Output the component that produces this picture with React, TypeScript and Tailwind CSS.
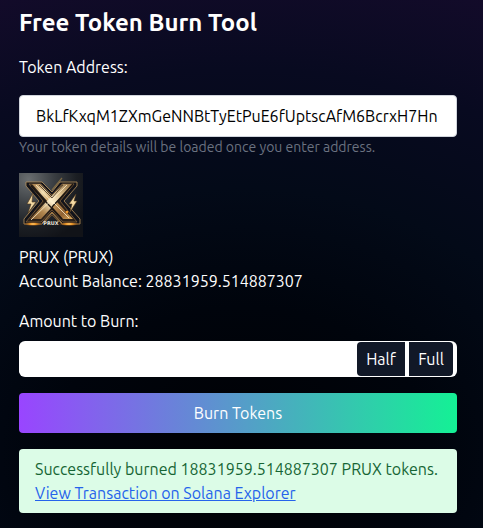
import { useState } from "react";

function TokenLogo() {
  return (
    <svg viewBox="0 0 64 64" className="mt-4 block size-16" role="img" aria-label="PRUX logo">
      <defs>
        <radialGradient id="plate" cx="0.15" cy="0.1" r="1">
          <stop offset="0" stopColor="#6a6e70" />
          <stop offset="0.4" stopColor="#3a3e42" />
          <stop offset="0.75" stopColor="#1b1e23" />
          <stop offset="1" stopColor="#111318" />
        </radialGradient>
        <linearGradient id="goldDown" x1="0" y1="0" x2="1" y2="1">
          <stop offset="0" stopColor="#a87d48" />
          <stop offset="0.25" stopColor="#eed6a8" />
          <stop offset="0.5" stopColor="#d0a364" />
          <stop offset="0.8" stopColor="#8f6234" />
          <stop offset="1" stopColor="#e0ac5c" />
        </linearGradient>
        <linearGradient id="goldUp" x1="1" y1="0" x2="0" y2="1">
          <stop offset="0" stopColor="#8a683c" />
          <stop offset="0.3" stopColor="#dcc08e" />
          <stop offset="0.5" stopColor="#fdf0cf" />
          <stop offset="0.75" stopColor="#b1874f" />
          <stop offset="1" stopColor="#7a532b" />
        </linearGradient>
        <radialGradient id="glow">
          <stop offset="0" stopColor="#fff3b8" />
          <stop offset="0.35" stopColor="#f09a2a" />
          <stop offset="1" stopColor="#8a4308" stopOpacity="0" />
        </radialGradient>
      </defs>
      <rect width="64" height="64" fill="url(#plate)" />
      <path d="M33 17L43 5" stroke="#7d6a45" strokeWidth="1.2" />
      <path d="M7 9H23L33 19L41 9H58V13L45 28L61 46V51H43L33 40L23 51H5V46L20 28L7 13Z" fill="#12131a" stroke="#b8925c" strokeWidth="0.8" />
      <path d="M10 11H22L33 22L43 11H55L41 28L58 49H44L33 37L22 49H7L24 28Z" fill="#2a2018" stroke="#80603a" strokeWidth="0.8" />
      <path d="M13 11H21L54 46H44Z" fill="url(#goldDown)" />
      <path d="M44 11H54L22 46H11Z" fill="url(#goldUp)" />
      <path d="M12 13L43 46M54 11L33 34" fill="none" stroke="#1c1510" strokeWidth="1.2" />
      <path d="M17 12L32 28M48 12L12 47M34 29L50 45" fill="none" stroke="#fff0cb" strokeWidth="0.8" />
      <path d="M20 12L33 25L44 12" fill="none" stroke="#40301f" strokeWidth="0.8" />
      <path d="M23 50L33 39L43 50" fill="none" stroke="#c98f45" strokeWidth="0.8" />
      <path d="M26 49L33 42L40 49" fill="none" stroke="#7d5528" strokeWidth="0.8" />
      <path d="M14 20L8 31H12L9 40L17 29H13Z" fill="#f3d9a3" stroke="#4f3519" strokeWidth="0.6" />
      <path d="M57 21L50 31H53L51 39L58 28H55Z" fill="#f3d9a3" stroke="#4f3519" strokeWidth="0.6" />
      <ellipse cx="14" cy="51" rx="10" ry="2" fill="url(#glow)" />
      <ellipse cx="50" cy="51" rx="11" ry="2" fill="url(#glow)" />
      <circle cx="48" cy="39" r="2" fill="url(#glow)" />
      <text x="32" y="52" textAnchor="middle" fontSize="5" fontWeight="700" fill="#e9e4da" fontFamily="DejaVu Sans, sans-serif">PRUX</text>
    </svg>
  );
}

export default function App() {
  const [address, setAddress] = useState("BkLfKxqM1ZXmGeNNBtTyEtPuE6fUptscAfM6BcrxH7Hn");
  const [amount, setAmount] = useState("");

  return (
    <main className="min-h-screen bg-[radial-gradient(130%_90%_at_50%_85%,#000104_0%,#00040c_30%,#030a18_55%,#080a20_80%,#140b2b_105%)] pt-[7px] pr-[26px] pb-4 pl-[19px] font-['Ubuntu','Noto_Sans',sans-serif] text-base text-white">
      <h1 className="mb-4 text-2xl font-bold">Free Token Burn Tool</h1>

      <label htmlFor="address" className="mb-4 block">Token Address:</label>
      <input
        id="address"
        type="text"
        value={address}
        onChange={(e) => setAddress(e.target.value)}
        className="block w-full rounded border border-gray-300 bg-white px-4 py-2 text-black"
      />
      <p className="text-sm text-[#6b7280]">Your token details will be loaded once you enter address.</p>

      <TokenLogo />
      <div className="mt-2 mb-4">
        <p>PRUX (PRUX)</p>
        <p>Account Balance: 28831959.514887307</p>
      </div>

      <label htmlFor="amount" className="mb-2 block">Amount to Burn:</label>
      <div className="flex rounded-md bg-white py-px pr-1">
        <input
          id="amount"
          type="text"
          value={amount}
          onChange={(e) => setAmount(e.target.value)}
          className="min-w-0 flex-1 rounded-l-md bg-white px-4 text-black outline-none"
        />
        <div className="flex gap-1">
          <button type="button" className="h-[34px] w-12 rounded-l bg-[#111827]">Half</button>
          <button type="button" className="h-[34px] w-11 rounded-r bg-[#111827]">Full</button>
        </div>
      </div>

      <button type="button" className="mt-4 block h-10 w-full rounded bg-[linear-gradient(to_right,#9945ff,#14f195)]">
        Burn Tokens
      </button>

      <div role="status" className="mt-4 rounded bg-[#dcfce7] px-4 py-2 text-[#166534]">
        <p>Successfully burned 18831959.514887307 PRUX tokens.</p>
        <a href="#transaction" className="block text-[#2563eb] underline">View Transaction on Solana Explorer</a>
      </div>
    </main>
  );
}
